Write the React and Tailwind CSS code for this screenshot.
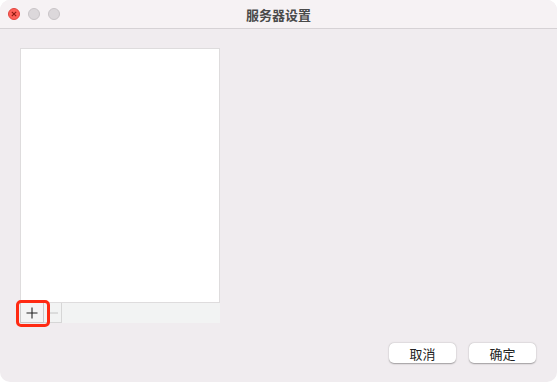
import React from 'react';

const App = () => {
    return (
        <div className="w-[557px] h-[382px] bg-white" style={{ fontFamily: '"Noto Sans CJK SC", "Liberation Sans", sans-serif' }}>
            <div className="w-full h-full rounded-[10px] overflow-hidden bg-[#f0ecef] flex flex-col">
                {/* Title bar */}
                <div className="relative h-[29px] bg-[#f6f2f4] border-b border-[#d6d2d5] flex items-center justify-center shrink-0">
                    <div className="absolute left-[8px] top-[8px] flex gap-[8px]">
                        <div className="w-[12px] h-[12px] rounded-full bg-[#fe5f57] border border-[#e0443e] flex items-center justify-center">
                            <svg width="6" height="6" viewBox="0 0 6 6">
                                <path d="M0.8 0.8 L5.2 5.2 M5.2 0.8 L0.8 5.2" stroke="#8c1a10" strokeWidth="1.1" />
                            </svg>
                        </div>
                        <div className="w-[12px] h-[12px] rounded-full bg-[#dcd8db] border border-[#c8c4c7]" />
                        <div className="w-[12px] h-[12px] rounded-full bg-[#dcd8db] border border-[#c8c4c7]" />
                    </div>
                    <span className="text-[13px] font-bold text-[#4a4a4a] leading-none">服务器设置</span>
                </div>

                {/* Body */}
                <div className="flex-1 flex flex-col pl-[20px] pr-[21px] pt-[19px]">
                    <div className="w-[200px] flex flex-col">
                        <div className="h-[255px] bg-white border border-[#dedcdd]" />
                        <div className="relative h-[20px] bg-[#f2f3f3] flex">
                            <div className="w-[24px] h-[20px] bg-[#f4f4f4] border border-[#c9c9c9] border-t-0 flex items-center justify-center">
                                <svg width="12" height="12" viewBox="0 0 12 12">
                                    <path d="M6 0.5 V11.5 M0.5 6 H11.5" stroke="#222" strokeWidth="1.1" />
                                </svg>
                            </div>
                            <div className="w-[18px] h-[20px] border border-[#d6d6d6] border-t-0 border-l-0 flex items-center justify-center">
                                <svg width="10" height="2" viewBox="0 0 10 2">
                                    <path d="M0 1 H10" stroke="#c4c4c4" strokeWidth="1" />
                                </svg>
                            </div>
                            <div className="absolute left-[-4px] top-[-3px] w-[34px] h-[27px] border-[3px] border-[#ff2a12] rounded-[5px]" />
                        </div>
                    </div>
                    <div className="flex justify-end gap-[13px] mt-[20px]">
                        <button className="w-[67px] h-[20px] bg-white rounded-[5px] shadow-[0_0.5px_1.5px_rgba(0,0,0,0.35)] text-[13px] text-[#222] leading-none">取消</button>
                        <button className="w-[67px] h-[20px] bg-white rounded-[5px] shadow-[0_0.5px_1.5px_rgba(0,0,0,0.35)] text-[13px] text-[#222] leading-none">确定</button>
                    </div>
                </div>
            </div>
        </div>
    );
};

export default App;
